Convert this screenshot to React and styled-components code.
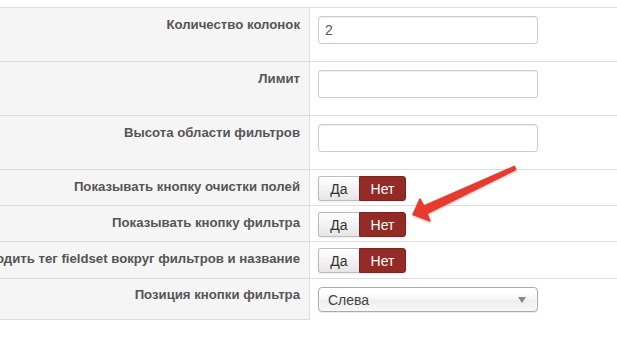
import styled, { createGlobalStyle } from 'styled-components';

const GlobalStyle = createGlobalStyle`
  html, body {
    margin: 0;
    padding: 0;
    background: #fff;
    font-family: "Liberation Sans", Arial, sans-serif;
  }
  * {
    box-sizing: border-box;
  }
`;

const Page = styled.div`
  position: relative;
  width: 617px;
  height: 337px;
  padding-top: 7px;
  overflow: hidden;
`;

const Form = styled.div`
  display: flex;
  flex-direction: column;
`;

const Row = styled.div`
  display: grid;
  grid-template-columns: 310px 1fr;
  height: ${(p) => p.$h}px;
  border-top: 1px solid #ddd;
`;

const Label = styled.div`
  display: flex;
  justify-content: flex-end;
  overflow: hidden;
  white-space: nowrap;
  background: #f5f5f5;
  border-right: 1px solid #ddd;
  border-bottom: ${(p) => (p.$last ? '1px solid #ddd' : 'none')};
  padding: ${(p) => p.$top}px 9px 0 0;
  font-size: 13.2px;
  line-height: 18px;
  font-weight: bold;
  color: #555;
`;

const Control = styled.div`
  padding: ${(p) => p.$top}px 0 0 8px;
`;

const TextInput = styled.input`
  display: block;
  width: 220px;
  height: 28px;
  padding: 4px 6px;
  border: 1px solid #ccc;
  border-radius: 3px;
  box-shadow: inset 0 1px 1px rgba(0, 0, 0, 0.075);
  font-family: "Liberation Sans", Arial, sans-serif;
  font-size: 14px;
  color: #555;
  outline: none;
`;

const Toggle = styled.div`
  display: inline-flex;
  height: 25px;
  border-radius: 3px;
  box-shadow: 0 1px 2px rgba(0, 0, 0, 0.08);
`;

const ToggleButton = styled.span`
  display: flex;
  align-items: center;
  justify-content: center;
  width: ${(p) => (p.$active ? 47 : 41)}px;
  font-size: 14px;
  border: 1px solid ${(p) => (p.$active ? '#7d221e' : '#bbb')};
  color: ${(p) => (p.$active ? '#fff' : '#333')};
  background: ${(p) =>
    p.$active ? '#942a25' : 'linear-gradient(#ffffff, #e6e6e6)'};
  &:first-child {
    border-radius: 3px 0 0 3px;
    border-right: none;
  }
  &:last-child {
    border-radius: 0 3px 3px 0;
  }
`;

const Select = styled.div`
  display: flex;
  align-items: center;
  justify-content: space-between;
  width: 220px;
  height: 25px;
  padding: 0 9px;
  border: 1px solid #aaa;
  border-radius: 4px;
  background: linear-gradient(#ffffff 20%, #f4f4f4 50%, #eeeeee 52%, #f6f6f6);
  box-shadow: 0 0 3px #fff inset, 0 1px 1px rgba(0, 0, 0, 0.1);
  font-size: 14px;
  color: #444;
`;

const Caret = styled.span`
  width: 0;
  height: 0;
  margin-right: 2px;
  border-left: 4px solid transparent;
  border-right: 4px solid transparent;
  border-top: 6px solid #888;
`;

const Overlay = styled.svg`
  position: absolute;
  left: 0;
  top: 0;
  pointer-events: none;
`;

const Arrow = () => (
  <Overlay width="617" height="337" viewBox="0 0 617 337">
    <defs>
      <filter id="sh" x="-10%" y="-10%" width="120%" height="130%">
        <feDropShadow dx="0" dy="1" stdDeviation="1" floodColor="#000" floodOpacity="0.25" />
      </filter>
    </defs>
    <polygon
      filter="url(#sh)"
      fill="#e63b2e"
      stroke="#e63b2e"
      strokeWidth="1.5"
      strokeLinejoin="round"
      points="514.4,166.4 424,206 420,199 413,214.5 430,221 427,213.5 515.8,169.6"
    />
  </Overlay>
);

const YesNo = () => (
  <Toggle>
    <ToggleButton>Да</ToggleButton>
    <ToggleButton $active>Нет</ToggleButton>
  </Toggle>
);

export default function App() {
  return (
    <Page>
      <GlobalStyle />
      <Form>
        <Row $h={54}>
          <Label $top={8}>Количество колонок</Label>
          <Control $top={8}>
            <TextInput defaultValue="2" />
          </Control>
        </Row>
        <Row $h={54}>
          <Label $top={8}>Лимит</Label>
          <Control $top={8}>
            <TextInput />
          </Control>
        </Row>
        <Row $h={54}>
          <Label $top={8}>Высота области фильтров</Label>
          <Control $top={8}>
            <TextInput />
          </Control>
        </Row>
        <Row $h={36}>
          <Label $top={8}>Показывать кнопку очистки полей</Label>
          <Control $top={6}>
            <YesNo />
          </Control>
        </Row>
        <Row $h={36}>
          <Label $top={8}>Показывать кнопку фильтра</Label>
          <Control $top={6}>
            <YesNo />
          </Control>
        </Row>
        <Row $h={37}>
          <Label $top={8}>Выводить тег fieldset вокруг фильтров и название</Label>
          <Control $top={6}>
            <YesNo />
          </Control>
        </Row>
        <Row $h={42}>
          <Label $top={7} $last>Позиция кнопки фильтра</Label>
          <Control $top={8}>
            <Select>
              Слева
              <Caret />
            </Select>
          </Control>
        </Row>
      </Form>
      <Arrow />
    </Page>
  );
}
